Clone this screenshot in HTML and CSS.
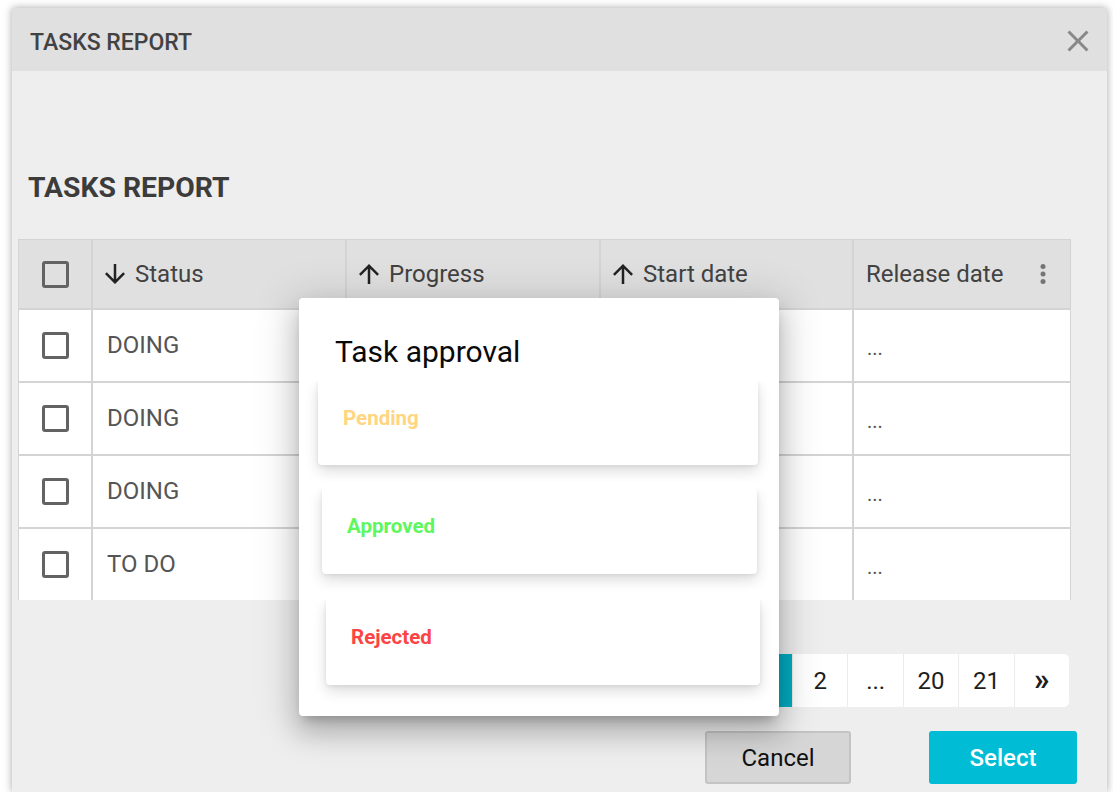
FILE: index.html
```html
<!DOCTYPE html>
<html lang="en">
<head>
<meta charset="utf-8">
<title>Tasks report</title>
<link rel="stylesheet" href="styles.css">
</head>
<body>
<div class="dialog">
  <header class="dialog-header">
    <h1 class="dialog-title">TASKS REPORT</h1>
    <button class="close-btn" aria-label="Close">
      <svg viewBox="0 0 24 24" width="36" height="36"><path d="M19 6.41L17.59 5 12 10.59 6.41 5 5 6.41 10.59 12 5 17.59 6.41 19 12 13.41 17.59 19 19 17.59 13.41 12z"/></svg>
    </button>
  </header>
  <main class="dialog-body">
    <h2 class="report-title">TASKS REPORT</h2>
    <div class="grid">
      <div class="cell head check"><span class="checkbox"></span></div>
      <div class="cell head"><svg class="sort-icon" viewBox="0 0 24 24"><path d="M20 12l-1.41-1.41L13 16.17V4h-2v12.17l-5.58-5.59L4 12l8 8 8-8z"/></svg><span>Status</span></div>
      <div class="cell head"><svg class="sort-icon" viewBox="0 0 24 24"><path d="M4 12l1.41 1.41L11 7.83V20h2V7.83l5.58 5.59L20 12l-8-8-8 8z"/></svg><span>Progress</span></div>
      <div class="cell head"><svg class="sort-icon" viewBox="0 0 24 24"><path d="M4 12l1.41 1.41L11 7.83V20h2V7.83l5.58 5.59L20 12l-8-8-8 8z"/></svg><span>Start date</span></div>
      <div class="cell head release-head"><span>Release date</span><svg class="more-icon" viewBox="0 0 24 24"><circle cx="12" cy="6" r="2"/><circle cx="12" cy="12" r="2"/><circle cx="12" cy="18" r="2"/></svg></div>

      <div class="cell check"><span class="checkbox"></span></div>
      <div class="cell text">DOING</div>
      <div class="cell"></div>
      <div class="cell"></div>
      <div class="cell dots">...</div>

      <div class="cell check"><span class="checkbox"></span></div>
      <div class="cell text">DOING</div>
      <div class="cell"></div>
      <div class="cell"></div>
      <div class="cell dots">...</div>

      <div class="cell check"><span class="checkbox"></span></div>
      <div class="cell text">DOING</div>
      <div class="cell"></div>
      <div class="cell"></div>
      <div class="cell dots">...</div>

      <div class="cell check"><span class="checkbox"></span></div>
      <div class="cell text">TO DO</div>
      <div class="cell"></div>
      <div class="cell"></div>
      <div class="cell dots">...</div>
    </div>
    <nav class="pagination">
      <span class="page">«</span>
      <span class="page active">1</span>
      <span class="page">2</span>
      <span class="page">...</span>
      <span class="page">20</span>
      <span class="page">21</span>
      <span class="page chevron">»</span>
    </nav>
    <div class="actions">
      <button class="btn cancel">Cancel</button>
      <button class="btn select">Select</button>
    </div>
  </main>
</div>

<div class="popup">
  <h3 class="popup-title">Task approval</h3>
  <div class="option-wrap">
    <div class="option-card pending">Pending</div>
  </div>
  <div class="option-wrap">
    <div class="option-card approved">Approved</div>
  </div>
  <div class="option-wrap last">
    <div class="option-card rejected">Rejected</div>
  </div>
</div>
</body>
</html>
```

FILE: styles.css
```css
* { box-sizing: border-box; }

html, body {
  margin: 0;
  padding: 0;
  background: #ffffff;
  font-family: Roboto, "Liberation Sans", Arial, sans-serif;
}

.dialog {
  margin: 8px 0 0 12px;
  width: 1095px;
  height: 784px;
  background: #eeeeee;
  box-shadow: 0 0 8px rgba(0, 0, 0, 0.35);
  display: flex;
  flex-direction: column;
}

.dialog-header {
  height: 63px;
  background: #e0e0e0;
  display: flex;
  align-items: center;
  justify-content: space-between;
  padding: 0 11px 0 18px;
}

.dialog-title {
  margin: 0;
  padding-top: 6px;
  font-size: 23px;
  font-weight: 500;
  color: #424242;
  line-height: 30px;
}

.close-btn {
  border: 0;
  background: transparent;
  padding: 0;
  margin-top: 2px;
  width: 36px;
  height: 36px;
  display: flex;
  cursor: pointer;
}

.close-btn svg { fill: #888888; }

.dialog-body {
  flex: 1;
  display: flex;
  flex-direction: column;
  padding: 97px 0 0 6px;
}

.report-title {
  margin: 0 0 31px 10px;
  font-size: 28.3px;
  font-weight: 700;
  line-height: 40px;
  color: #3c3c3c;
}

.grid {
  width: 1053px;
  display: grid;
  grid-template-columns: 72px 252px 252px 251px 216px;
  grid-template-rows: 68px repeat(4, 71px);
  gap: 2px;
  padding: 1px 1px 0 1px;
  background: #d4d4d4;
}

.cell {
  background: #ffffff;
  display: flex;
  align-items: center;
  font-size: 24px;
  color: #555555;
}

.cell.head {
  background: #e0e0e0;
  color: #424242;
  padding-left: 7px;
}

.cell.check {
  justify-content: center;
  padding-left: 0;
}

.checkbox {
  width: 27px;
  height: 27px;
  border: 3px solid #636363;
  border-radius: 3px;
}

.sort-icon {
  width: 30px;
  height: 30px;
  fill: #222222;
  margin-right: 5px;
  flex: none;
}

.release-head {
  justify-content: space-between;
  padding-left: 12px !important;
  padding-right: 12px;
}

.more-icon {
  width: 30px;
  height: 30px;
  fill: #757575;
}

.cell.text {
  padding-left: 14px;
  padding-bottom: 1px;
}

.cell.dots {
  padding: 5px 0 0 13px;
  font-size: 20px;
  color: #555555;
}

.pagination {
  align-self: flex-end;
  margin: 54px 38px 0 0;
  height: 53px;
  display: flex;
  gap: 1px;
  background: #ececec;
  border-radius: 5px;
  overflow: hidden;
}

.page {
  width: 54.4px;
  height: 53px;
  background: #ffffff;
  display: flex;
  align-items: center;
  justify-content: center;
  font-size: 24px;
  color: #1e1e1e;
}

.page.active {
  background: #00acc1;
  color: #ffffff;
}

.page.chevron {
  font-size: 31px;
  font-weight: 700;
  padding-bottom: 3px;
}

.actions {
  margin: 24px 30px 0 0;
  display: flex;
  justify-content: flex-end;
  gap: 78px;
}

.btn {
  height: 53px;
  border-radius: 3px;
  font-family: Roboto, "Liberation Sans", Arial, sans-serif;
  font-size: 24px;
  padding: 0;
  cursor: pointer;
}

.btn.cancel {
  width: 146px;
  background: #d6d6d6;
  border: 2px solid #c4c4c4;
  color: #111111;
}

.btn.select {
  width: 148px;
  background: #00bcd4;
  border: 0;
  color: #ffffff;
  font-weight: 500;
}

/* Task approval popup */
.popup {
  position: absolute;
  left: 299px;
  top: 298px;
  width: 480px;
  height: 418px;
  background: #ffffff;
  border-radius: 4px;
  overflow: hidden;
  box-shadow: 0 8px 10px -5px rgba(0, 0, 0, 0.22),
              0 16px 24px 2px rgba(0, 0, 0, 0.16),
              0 6px 40px 8px rgba(0, 0, 0, 0.14);
}

.popup-title {
  margin: 0;
  height: 83px;
  padding: 39px 0 0 36px;
  font-size: 30px;
  font-weight: 400;
  line-height: 30px;
  color: #0a0a0a;
}

.option-wrap {
  height: 108px;
  overflow: hidden;
}

.option-wrap + .option-wrap { height: 111px; }
.option-wrap.last { height: 116px; }

.option-card {
  height: 84px;
  background: #ffffff;
  border-radius: 0 0 4px 4px;
  box-shadow: 0 6px 14px rgba(0, 0, 0, 0.14), 0 1px 4px rgba(0, 0, 0, 0.08);
  padding: 25px 24px 0 25px;
  font-size: 20.5px;
  font-weight: 700;
  line-height: 24px;
}

.option-card.pending {
  margin-left: 19px;
  width: 440px;
  color: #ffd580;
}

.option-card.approved {
  margin-left: 23px;
  width: 435px;
  height: 85px;
  color: #5ef75e;
}

.option-card.rejected {
  margin-left: 27px;
  width: 434px;
  height: 85px;
  color: #fc4444;
}
```
